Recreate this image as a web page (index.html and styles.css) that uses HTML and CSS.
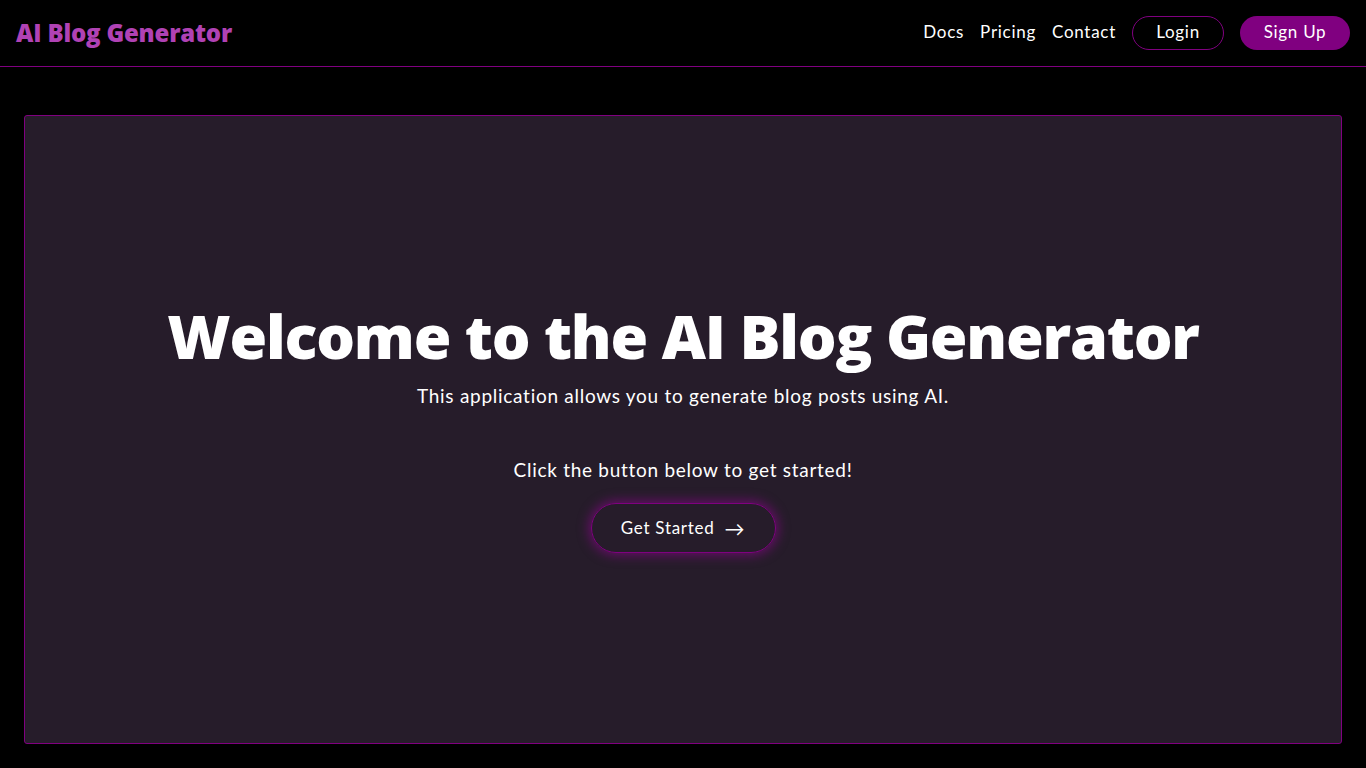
FILE: index.html
```html
<!DOCTYPE html>
<html lang="en">
<head>
<meta charset="utf-8">
<title>AI Blog Generator</title>
<link rel="stylesheet" href="styles.css">
</head>
<body>
<header class="topbar">
  <div class="logo">AI Blog Generator</div>
  <nav class="nav">
    <a class="nav-link" href="#">Docs</a>
    <a class="nav-link" href="#">Pricing</a>
    <a class="nav-link" href="#">Contact</a>
    <a class="btn btn-outline" href="#">Login</a>
    <a class="btn btn-fill" href="#">Sign Up</a>
  </nav>
</header>
<main class="main">
  <section class="card">
    <h1 class="title">Welcome to the AI Blog Generator</h1>
    <p class="subtitle">This application allows you to generate blog posts using AI.</p>
    <p class="cta-text">Click the button below to get started!</p>
    <a class="start-btn" href="#">Get Started <span class="arrow">&rarr;</span></a>
  </section>
</main>
</body>
</html>
```
FILE: styles.css
```css
* { box-sizing: border-box; }
html, body { margin: 0; padding: 0; background: #000; }
body {
  font-family: "Lato", "Open Sans", sans-serif;
  letter-spacing: 0.045em;
  color: #fff;
  height: 768px;
  overflow: hidden;
}
a { color: inherit; text-decoration: none; }
.topbar {
  height: 67px;
  display: flex;
  align-items: center;
  justify-content: space-between;
  padding: 0 16px;
  border-bottom: 1px solid #800080;
}
.logo {
  font-family: "Open Sans", sans-serif;
  font-weight: 800;
  font-size: 24px;
  letter-spacing: -0.2px;
  color: #b042b4;
  padding-bottom: 1px;
}
.nav {
  display: flex;
  align-items: center;
}
.nav-link {
  font-size: 17px;
  margin-right: 16px;
  padding-bottom: 4px;
}
.btn {
  font-size: 17px;
  height: 34px;
  border-radius: 17px;
  display: inline-flex;
  align-items: center;
  justify-content: center;
  padding-bottom: 3px;
}
.btn-outline {
  width: 92px;
  border: 1px solid #800080;
  margin-right: 16px;
}
.btn-fill {
  width: 110px;
  background: #800080;
}
.main {
  padding: 48px 24px 25px;
}
.card {
  height: 629px;
  background: #261c2a;
  border: 1px solid #800080;
  border-radius: 3px;
  display: flex;
  flex-direction: column;
  align-items: center;
  justify-content: center;
  padding-bottom: 6px;
}
.title {
  margin: 0;
  font-family: "Open Sans", sans-serif;
  font-weight: 800;
  font-size: 61px;
  letter-spacing: -1.2px;
  line-height: 70px;
}
.subtitle {
  margin: 12px 0 0;
  font-size: 19px;
  line-height: 26px;
}
.cta-text {
  margin: 48px 0 0;
  font-size: 19px;
  line-height: 26px;
}
.start-btn {
  margin-top: 20px;
  width: 185px;
  height: 50px;
  border-radius: 25px;
  border: 1px solid #800080;
  box-shadow: 0 0 12px 2px rgba(160, 0, 160, 0.55);
  display: flex;
  align-items: center;
  justify-content: center;
  font-size: 17px;
}
.arrow { margin-left: 10px; font-size: 20px; }
```
